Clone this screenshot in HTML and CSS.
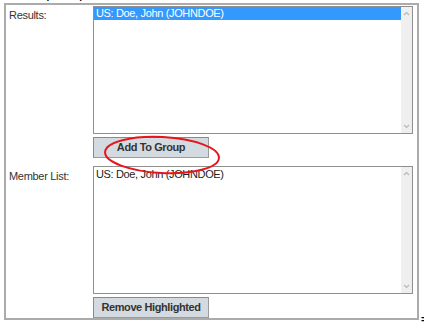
FILE: index.html
```html
<!DOCTYPE html>
<html>
<head>
<meta charset="utf-8">
<link rel="stylesheet" href="styles.css">
</head>
<body>
<div class="cut-heading"><span>Set up Group</span></div>
<div class="row">
  <div class="panel">
    <div class="field">
      <div class="label">Results:</div>
      <div class="control">
        <div class="listbox">
          <div class="items">
            <div class="item selected">US: Doe, John (JOHNDOE)</div>
          </div>
          <div class="scroll">
            <svg class="arrow" viewBox="0 0 7 5" width="7" height="5"><path d="M1 4 L3.5 1.5 L6 4" fill="none" stroke="#b8b8b8" stroke-width="1.2"/></svg>
            <svg class="arrow" viewBox="0 0 7 5" width="7" height="5"><path d="M1 1 L3.5 3.5 L6 1" fill="none" stroke="#b8b8b8" stroke-width="1.2"/></svg>
          </div>
        </div>
        <button class="btn">Add To Group</button>
      </div>
    </div>
    <div class="field member">
      <div class="label">Member List:</div>
      <div class="control">
        <div class="listbox">
          <div class="items">
            <div class="item">US: Doe, John (JOHNDOE)</div>
          </div>
          <div class="scroll">
            <svg class="arrow" viewBox="0 0 7 5" width="7" height="5"><path d="M1 4 L3.5 1.5 L6 4" fill="none" stroke="#b8b8b8" stroke-width="1.2"/></svg>
            <svg class="arrow" viewBox="0 0 7 5" width="7" height="5"><path d="M1 1 L3.5 3.5 L6 1" fill="none" stroke="#b8b8b8" stroke-width="1.2"/></svg>
          </div>
        </div>
        <button class="btn">Remove Highlighted</button>
      </div>
    </div>
    <svg class="annot" width="124" height="44" viewBox="0 0 124 44">
      <ellipse cx="63" cy="22" rx="57" ry="18" transform="rotate(3 63 22)" fill="none" stroke="#e8141c" stroke-width="2"/>
    </svg>
  </div>
  <span class="eq">=</span>
</div>
</body>
</html>
```

FILE: styles.css
```css
html, body {
  margin: 0;
  padding: 0;
  background: #ffffff;
}

body {
  font-family: "Liberation Sans", Arial, sans-serif;
  font-size: 11px;
  color: #333333;
  width: 424px;
  height: 326px;
  overflow: hidden;
}

.cut-heading {
  height: 3px;
  overflow: hidden;
  padding-left: 22px;
}

.cut-heading span {
  display: block;
  margin-top: -9.5px;
  font-size: 10px;
  line-height: 10px;
  font-weight: bold;
  color: #000;
  white-space: nowrap;
}

.row {
  display: flex;
  align-items: flex-end;
}

.panel {
  position: relative;
  margin-left: 4px;
  width: 405px;
  border: 2px solid #ababab;
  padding: 1px 4px 0 3px;
  display: flex;
  flex-direction: column;
  gap: 8px;
}

.field {
  display: grid;
  grid-template-columns: 84px 320px;
}

.label {
  padding-top: 3px;
  line-height: 13px;
  letter-spacing: -0.3px;
  color: #333;
}

.member .label {
  padding-top: 4px;
}

.control {
  display: flex;
  flex-direction: column;
  align-items: flex-start;
  gap: 3px;
}

.listbox {
  width: 320px;
  height: 128px;
  box-sizing: border-box;
  border: 1px solid #8f8f8f;
  display: flex;
  background: #fff;
}

.items {
  flex: 1;
}

.item {
  line-height: 13px;
  height: 13px;
  padding-left: 2px;
  letter-spacing: -0.35px;
  color: #222;
  white-space: nowrap;
}

.member .item {
  padding-top: 1px;
}

.item.selected {
  background: #3399ff;
  color: #ffffff;
}

.scroll {
  width: 11px;
  background: #efefef;
  display: flex;
  flex-direction: column;
  justify-content: space-between;
  align-items: center;
  padding: 4px 0;
}

.arrow {
  display: block;
}

.btn {
  width: 116px;
  height: 21px;
  box-sizing: border-box;
  background: #d3dbe0;
  border: 1px solid #8a8a8a;
  border-right-color: #9a9a9a;
  border-bottom-color: #9a9a9a;
  font-family: "Liberation Sans", Arial, sans-serif;
  font-size: 11px;
  font-weight: bold;
  letter-spacing: -0.4px;
  color: #333333;
  padding: 0;
  margin: 0;
  text-align: center;
  line-height: 19px;
}

.annot {
  position: absolute;
  left: 93px;
  top: 128px;
  pointer-events: none;
}

.eq {
  font-size: 11px;
  line-height: 8px;
  color: #000;
  margin-left: 2px;
  margin-bottom: -3px;
  font-weight: bold;
}
```
